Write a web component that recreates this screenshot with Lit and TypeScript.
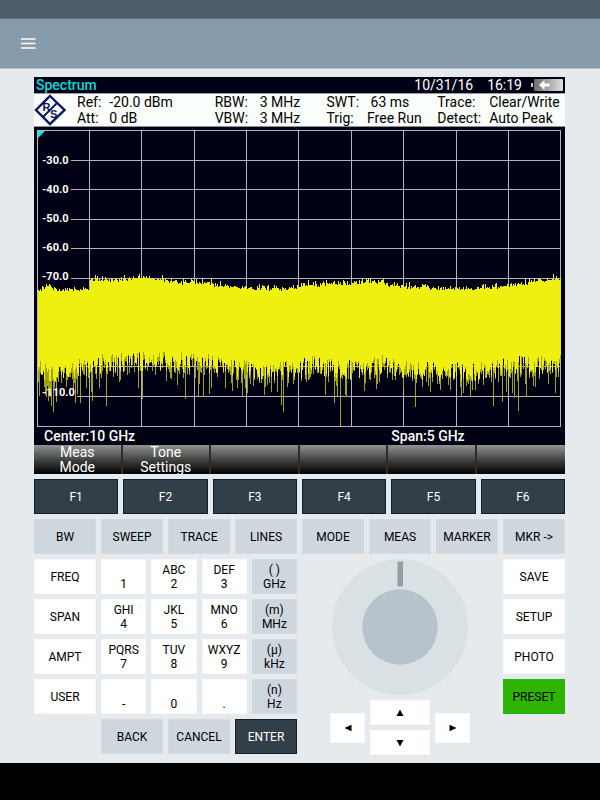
import { LitElement, html, css, svg } from "lit";
import { customElement, property } from "lit/decorators.js";

/* ---------- trace data ---------- */

type Point = [number, number];

const PLOT_LEFT = 4;
const PLOT_RIGHT = 527;

// Coordinates are in plot units: x from the screen's left edge, y from the plot's top.
const TOP_ENVELOPE: Point[] = [
  [4, 162], [12, 160], [30, 162], [50, 162], [55, 161], [56, 152], [90, 152], [110, 150],
  [125, 152], [145, 155], [170, 155], [190, 159], [220, 161], [262, 161], [266, 158],
  [310, 156], [335, 154], [355, 157], [380, 160], [440, 161], [465, 160], [482, 157],
  [500, 154], [528, 152],
];
const BOTTOM_ENVELOPE: Point[] = [
  [4, 243], [20, 246], [40, 245], [56, 239], [80, 237], [100, 236], [130, 235], [160, 237],
  [190, 240], [215, 244], [240, 246], [265, 243], [280, 238], [300, 243], [330, 243],
  [350, 239], [370, 243], [400, 246], [440, 246], [460, 243], [480, 239], [510, 240], [528, 236],
];
const SPIKES: Point[] = [
  [12, 270], [17, 279], [41, 276], [58, 274], [72, 279], [108, 272], [151, 272], [164, 269],
  [169, 270], [208, 269], [230, 268], [247, 278], [249, 285], [291, 268], [300, 276],
  [306, 299], [311, 268], [381, 280], [459, 279], [468, 275], [480, 271], [484, 284], [492, 270],
];

function sample(points: Point[], x: number): number {
  for (let i = 1; i < points.length; i++) {
    const [x0, y0] = points[i - 1];
    const [x1, y1] = points[i];
    if (x <= x1) return y0 + ((y1 - y0) * (x - x0)) / (x1 - x0);
  }
  return points[points.length - 1][1];
}

function buildTrace() {
  let seed = 20161;
  const random = () => {
    seed = (seed * 1103515245 + 12345) % 2147483648;
    return seed / 2147483648;
  };
  const spikes = new Map<number, number>(SPIKES);
  let body = "";
  let tails = "";
  for (let x = PLOT_LEFT; x < PLOT_RIGHT; x++) {
    const top = Math.round(sample(TOP_ENVELOPE, x) - 6 * random() * random() + 3 * random());
    const base = sample(BOTTOM_ENVELOPE, x);
    const bottom = Math.round(base - 11 + 20 * random());
    const noisy = x < 56 ? 36 : 26;
    const tail = spikes.get(x) ?? Math.round(bottom + noisy * random() * random());
    body += `M${x} ${top}h1V${bottom}h-1z`;
    if (tail > bottom) tails += `M${x} ${bottom}h1V${tail}h-1z`;
  }
  return { body, tails };
}

const TRACE = buildTrace();
const COLUMNS = [4, 56, 108, 161, 213, 265, 318, 370, 423, 475, 527];
// Each row line: its start and its height; a labelled row starts right of the label.
const ROWS: Point[] = [
  [3, 3], [37, 33], [37, 62], [37, 92], [37, 121], [37, 151],
  [3, 180], [3, 210], [3, 239], [43, 269], [3, 299],
];
const LABELS: [string, number][] = [
  ["-30.0", 33], ["-40.0", 62], ["-50.0", 91], ["-60.0", 120], ["-70.0", 149], ["-110.0", 265],
];

/* ---------- instrument screen ---------- */

@customElement("analyzer-screen")
export class AnalyzerScreen extends LitElement {
  static styles = css`
    :host {
      display: block;
      background: #000014;
      color: #fff;
      font: 14px/16px Roboto, "Liberation Sans", sans-serif;
    }
    .title {
      display: flex;
      align-items: center;
      height: 16px;
      padding: 0 2px;
      border-bottom: 1px solid #9a9aa2;
    }
    .mode { flex: 1; color: #00dcdc; font-weight: 500; }
    .date { margin-right: 14px; }
    .time { margin-right: 9px; }
    .battery { display: block; }
    .info {
      display: grid;
      grid-template-columns: 43px 138fr 112fr 111fr 128fr;
      background: #fbfffb;
      color: #000;
      border-bottom: 1px solid #8c8c94;
    }
    .logo { display: block; }
    .group { display: grid; grid-template-columns: auto 1fr; margin: 0; align-content: center; }
    .name { padding-right: 8px; }
    .value { margin: 0; white-space: pre; }
    .plot { display: block; width: 100%; height: auto; }
    .grid { fill: none; stroke: #b4b4ba; }
    .label { font: 700 11px Roboto, "Liberation Sans", sans-serif; fill: #fff; }
    .range {
      display: grid;
      grid-template-columns: 2fr 1fr;
      padding: 1px 0 1px 10px;
      font-weight: 500;
    }
    .softkeys { display: grid; grid-template-columns: repeat(6, 1fr); background: #000; }
    .softkey {
      height: 29px;
      margin: 0;
      padding: 0;
      border: 0 solid #2c2c2c;
      border-right-width: 2px;
      background: linear-gradient(#929492, #6a6c6a 25%, #343634 60%, #060606 95%);
      color: #fff;
      font: 14px/15px Roboto, "Liberation Sans", sans-serif;
      white-space: pre;
    }
    .softkey:last-child { border-right-width: 0; }
  `;

  private info: [string, string][][] = [
    [["Ref:", "-20.0 dBm"], ["Att:", "0 dB"]],
    [["RBW:", " 3 MHz"], ["VBW:", " 3 MHz"]],
    [["SWT:", " 63 ms"], ["Trig:", "Free Run"]],
    [["Trace:", "Clear/Write"], ["Detect:", "Auto Peak"]],
  ];

  private softkeys = ["Meas\nMode", "Tone\nSettings", "", "", "", ""];

  render() {
    return html`
      <div class="title">
        <span class="mode">Spectrum</span>
        <span class="date">10/31/16</span>
        <span class="time">16:19</span>
        <svg class="battery" width="32" height="14" viewBox="0 0 32 14" aria-hidden="true">
          <defs>
            <linearGradient id="cell" x1="0" x2="1">
              <stop offset="0" stop-color="#6c6c6c" />
              <stop offset="0.5" stop-color="#a8a8a8" />
              <stop offset="1" stop-color="#e0e0e0" />
            </linearGradient>
          </defs>
          <rect x="0" y="5" width="2" height="4" fill="#c8c8c8" />
          <rect x="3" y="1" width="29" height="12" rx="1" fill="url(#cell)" />
          <path d="M8 7l5.500-5v3.500h5v3h-5v3.500z" fill="#fff" />
        </svg>
      </div>
      <div class="info">
        <svg class="logo" width="34" height="32" viewBox="0 0 34 32" role="img" aria-label="R and S">
          <path d="M16 2L30.500 16L16 30L2 16Z" fill="none" stroke="#0a1464" stroke-width="2.400" />
          <path d="M9 9L14 4M23 9L9 23M23 23L18 28" stroke="#0a1464" stroke-width="1.800" />
          <text x="8.500" y="17" font-family="Liberation Sans, sans-serif" font-size="11" font-weight="700" fill="#0a1464">R</text>
          <text x="16" y="24" font-family="Liberation Sans, sans-serif" font-size="11" font-weight="700" fill="#0a1464">S</text>
        </svg>
        ${this.info.map(
          (group) => html`<dl class="group">
            ${group.map(([name, value]) => html`<dt class="name">${name}</dt><dd class="value">${value}</dd>`)}
          </dl>`,
        )}
      </div>
      <svg class="plot" viewBox="0 0 531 300" role="img" aria-label="Spectrum trace">
        <path class="grid" d=${COLUMNS.map((x) => `M${x - 0.5} 3V299`).join("")} />
        <path class="grid" d=${ROWS.map(([x, y]) => `M${x} ${y + 0.5}H527`).join("")} />
        <path d=${TRACE.tails} fill="#a2a30e" />
        <path d=${TRACE.body} fill="#f0f010" />
        <path d="M4 4h7l-7 7z" fill="#00f0f0" />
        ${LABELS.map(([text, y]) => svg`<text class="label" x="8" y=${y + 4}>${text}</text>`)}
      </svg>
      <div class="range"><span>Center:10 GHz</span><span>Span:5 GHz</span></div>
      <div class="softkeys">
        ${this.softkeys.map(
          (text, i) => html`<button class="softkey" aria-label=${text || `Softkey ${i + 1}`}>${text}</button>`,
        )}
      </div>
    `;
  }
}

/* ---------- key ---------- */

@customElement("panel-key")
export class PanelKey extends LitElement {
  static styles = css`
    :host { display: grid; }
    .key {
      height: 35px;
      margin: 0;
      padding: 0;
      border: 1px solid #f8f9fa;
      background: #fff;
      color: #000;
      font: 12px/14px Roboto, "Liberation Sans", sans-serif;
      white-space: pre;
    }
    .grey { background: #cfd7de; border-color: #d3dae0; }
    .dark { background: #323e48; border-color: #0c2230; color: #fff; }
    .green { background: #2eb400; border-color: #22b422; }
    .wide { height: 25px; }
    .side { height: 30px; }
    .arrow { display: block; margin: 0 auto; }
  `;

  @property() text = "";
  @property() tone = "white";
  @property() arrow = "";

  private shapes: Record<string, string> = {
    up: "M4 0.500L7.500 7H0.500z",
    down: "M4 7.500L0.500 1H7.500z",
    left: "M0.500 4L7.500 0.800V7.200z",
    right: "M7.500 4L0.500 0.800V7.200z",
  };

  render() {
    if (this.arrow) {
      const size = this.arrow === "up" || this.arrow === "down" ? "wide" : "side";
      return html`<button class="key ${size}" aria-label=${this.arrow}
        ><svg class="arrow" width="8" height="8" viewBox="0 0 8 8"><path d=${this.shapes[this.arrow]} /></svg
      ></button>`;
    }
    return html`<button class="key ${this.tone}">${this.text}</button>`;
  }
}

/* ---------- page ---------- */

@customElement("app-root")
export class AppRoot extends LitElement {
  static styles = css`
    :host {
      display: flex;
      flex-direction: column;
      min-height: 100vh;
      background: #000;
    }
    .status { height: 18px; background: #4d5e6b; border-bottom: 1px solid #62737f; }
    .toolbar {
      display: flex;
      align-items: center;
      height: 49px;
      padding: 0 20px;
      background: #879baa;
      border-bottom: 1px solid #b4c0c9;
    }
    .menu { margin: 0; padding: 0; border: 0; background: none; }
    .icon { display: block; }
    .panel {
      display: grid;
      gap: 5px;
      padding: 8px 35px 8px 34px;
      background: #e6eaed;
    }
    .six { display: grid; grid-template-columns: repeat(6, 1fr); gap: 5px; }
    .eight { display: grid; grid-template-columns: repeat(8, 1fr); gap: 5px; align-items: start; }
    .stack { display: grid; gap: 5px; }
    .pad { grid-column: span 3; display: grid; gap: 5px; }
    .digits { display: grid; grid-template-columns: repeat(4, 1fr); gap: 5px; }
    .actions { display: grid; grid-template-columns: repeat(3, 1fr); gap: 5px; }
    .control { grid-column: span 3; display: grid; justify-items: center; gap: 5px; }
    .dial { display: block; }
    .arrows { display: grid; grid-template-columns: 35px 60px 35px; gap: 5px; align-items: center; }
  `;

  private functions = ["F1", "F2", "F3", "F4", "F5", "F6"];
  private settings = ["BW", "SWEEP", "TRACE", "LINES", "MODE", "MEAS", "MARKER", "MKR ->"];
  private parameters = ["FREQ", "SPAN", "AMPT", "USER"];
  private digits = [
    " \n1", "ABC\n2", "DEF\n3", "( )\nGHz",
    "GHI\n4", "JKL\n5", "MNO\n6", "(m)\nMHz",
    "PQRS\n7", "TUV\n8", "WXYZ\n9", "(µ)\nkHz",
    " \n-", " \n0", " \n.", "(n)\nHz",
  ];
  private system = ["SAVE", "SETUP", "PHOTO", "PRESET"];

  render() {
    const key = (text: string, tone = "white") => html`<panel-key .text=${text} .tone=${tone}></panel-key>`;
    return html`
      <div class="status"></div>
      <header class="toolbar">
        <button class="menu" aria-label="Menu">
          <svg class="icon" width="16" height="12" viewBox="0 0 16 12">
            <path d="M1 1h14.500M1 5.500h14.500M1 10h14.500" stroke="#fff" stroke-width="1.600" />
          </svg>
        </button>
      </header>
      <main class="panel">
        <analyzer-screen></analyzer-screen>
        <div class="six">${this.functions.map((t) => key(t, "dark"))}</div>
        <div class="eight">${this.settings.map((t) => key(t, "grey"))}</div>
        <div class="eight">
          <div class="stack">${this.parameters.map((t) => key(t))}</div>
          <div class="pad">
            <div class="digits">${this.digits.map((t, i) => key(t, i % 4 === 3 ? "grey" : "white"))}</div>
            <div class="actions">${key("BACK", "grey")}${key("CANCEL", "grey")}${key("ENTER", "dark")}</div>
          </div>
          <div class="control">
            <svg class="dial" width="136" height="136" viewBox="0 0 136 136" role="img" aria-label="Dial">
              <circle cx="68" cy="68" r="68" fill="#dae1e4" />
              <circle cx="68" cy="68" r="37.700" fill="#b6c2cc" />
              <rect x="65.500" y="2.500" width="5.500" height="25" fill="#9a9d9f" />
            </svg>
            <div class="arrows">
              <panel-key arrow="left"></panel-key>
              <div class="stack">
                <panel-key arrow="up"></panel-key>
                <panel-key arrow="down"></panel-key>
              </div>
              <panel-key arrow="right"></panel-key>
            </div>
          </div>
          <div class="stack">${this.system.map((t) => key(t, t === "PRESET" ? "green" : "white"))}</div>
        </div>
      </main>
    `;
  }
}
